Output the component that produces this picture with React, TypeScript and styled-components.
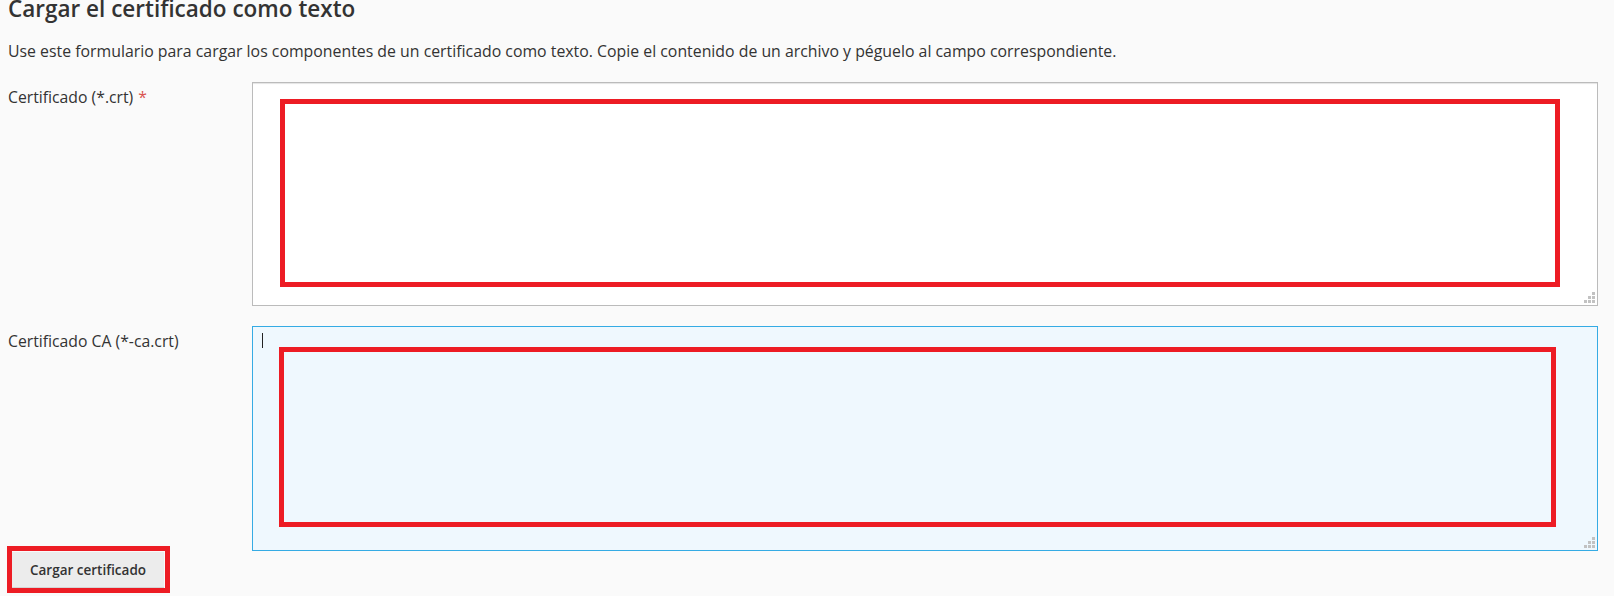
import React from 'react';
import styled, {createGlobalStyle} from 'styled-components';

const GlobalStyle = createGlobalStyle`
  html, body {
    margin: 0;
    padding: 0;
    background: #fafafa;
    overflow: hidden;
  }
  body {
    font-family: 'Open Sans', 'Liberation Sans', sans-serif;
    color: #333;
  }
`;

const Page = styled.div`
  padding: 0 16px 0 8px;
  height: 596px;
`;

const Title = styled.h2`
  margin: 0;
  font-size: 22.5px;
  line-height: 17px;
  font-weight: 600;
  color: #333;
`;

const Intro = styled.p`
  margin: 23px 0 0;
  font-size: 15.85px;
  line-height: 22px;
`;

const FieldRow = styled.div`
  display: grid;
  grid-template-columns: 244px 1fr;
  margin-top: 20px;
`;

const Label = styled.label`
  font-size: 15.75px;
  line-height: 22px;
  padding-top: 3.5px;
`;

const Required = styled.span`
  color: #d9534f;
  margin-left: 5px;
`;

const AreaWrap = styled.div`
  position: relative;
  height: ${p => p.$height}px;
`;

const Area = styled.textarea`
  box-sizing: border-box;
  display: block;
  width: 100%;
  height: 100%;
  margin: 0;
  padding: 6px 10px;
  resize: none;
  outline: none;
  font-family: inherit;
  font-size: 15px;
  border: 1px solid ${p => (p.$focused ? '#35abe4' : '#bbb')};
  background: ${p => (p.$focused ? '#eff8fe' : '#fff')};
  box-shadow: ${p => (p.$focused ? 'none' : 'inset 0 2px 1px -1px #e4e4e4')};
`;

const Grip = styled.svg`
  position: absolute;
  right: 3px;
  bottom: 3px;
  width: 11px;
  height: 11px;
  pointer-events: none;
`;

const Caret = styled.span`
  position: absolute;
  left: 10px;
  top: 7px;
  width: 1px;
  height: 15px;
  background: #222;
`;

// red annotation frames laid over the form
const Highlight = styled.div`
  position: absolute;
  box-sizing: border-box;
  border: 5px solid #ed1c24;
  pointer-events: none;
`;

const Actions = styled.div`
  margin-top: 1px;
  padding-left: 4px;
`;

const ButtonWrap = styled.div`
  position: relative;
  display: inline-block;
`;

const Button = styled.button`
  width: 152px;
  height: 36px;
  border: none;
  border-bottom: 1px solid #d4d4d4;
  background: #ececec;
  color: #333;
  font-family: inherit;
  font-size: 13.5px;
  font-weight: 600;
  padding: 0;
  cursor: pointer;
`;

const ResizeGrip = () => (
  <Grip viewBox="0 0 11 11">
    {[
      [8, 0],
      [4, 4],
      [8, 4],
      [0, 8],
      [4, 8],
      [8, 8],
    ].map(([x, y]) => (
      <rect key={`${x}-${y}`} x={x} y={y} width="3" height="3" fill="#c2c2c2" />
    ))}
  </Grip>
);

const App = () => {
  return (
    <>
      <GlobalStyle />
      <Page>
        <Title>Cargar el certificado como texto</Title>
        <Intro>
          Use este formulario para cargar los componentes de un certificado como texto. Copie el
          contenido de un archivo y péguelo al campo correspondiente.
        </Intro>

        <FieldRow>
          <Label htmlFor="crt">
            Certificado (*.crt)<Required>*</Required>
          </Label>
          <AreaWrap $height={224}>
            <Area id="crt" />
            <ResizeGrip />
            <Highlight style={{left: 28, top: 17, width: 1280, height: 188}} />
          </AreaWrap>
        </FieldRow>

        <FieldRow>
          <Label htmlFor="cab">Certificado CA (*-ca.crt)</Label>
          <AreaWrap $height={225}>
            <Area id="cab" $focused />
            <Caret />
            <ResizeGrip />
            <Highlight style={{left: 27, top: 21, width: 1277, height: 180}} />
          </AreaWrap>
        </FieldRow>

        <Actions>
          <ButtonWrap>
            <Button type="button">Cargar certificado</Button>
            <Highlight style={{left: -5, top: -6, width: 163, height: 47}} />
          </ButtonWrap>
        </Actions>
      </Page>
    </>
  );
};

export default App;
